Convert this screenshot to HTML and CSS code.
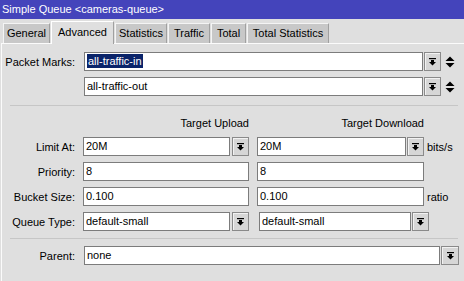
FILE: index.html
```html
<!DOCTYPE html>
<html>
<head>
<meta charset="utf-8">
<link rel="stylesheet" href="styles.css">
</head>
<body>
<div class="window">
  <div class="titlebar">Simple Queue &lt;cameras-queue&gt;</div>
  <div class="tabs">
    <div class="tab t-general">General</div>
    <div class="tab active t-advanced">Advanced</div>
    <div class="tab t-stats">Statistics</div>
    <div class="tab t-traffic">Traffic</div>
    <div class="tab t-total">Total</div>
    <div class="tab t-totalstats">Total Statistics</div>
  </div>
  <div class="panel">
    <div class="row wide">
      <span class="lbl">Packet Marks:</span>
      <div class="field grow"><span class="sel">all-traffic-in</span></div>
      <div class="dd"><svg width="7" height="8" viewBox="0 0 7 8"><rect x="0" y="0" width="7" height="1.2" fill="#000"/><rect x="2" y="2" width="3" height="2.5" fill="#000"/><polygon points="0,4 7,4 3.5,7.6" fill="#000"/></svg></div>
      <div class="updown"><svg width="10" height="12" viewBox="0 0 10 12"><polygon points="5,0.5 9.5,5 0.5,5" fill="#000"/><polygon points="0.5,7 9.5,7 5,11.5" fill="#000"/></svg></div>
    </div>
    <div class="row wide">
      <span class="lbl"></span>
      <div class="field grow">all-traffic-out</div>
      <div class="dd"><svg width="7" height="8" viewBox="0 0 7 8"><rect x="0" y="0" width="7" height="1.2" fill="#000"/><rect x="2" y="2" width="3" height="2.5" fill="#000"/><polygon points="0,4 7,4 3.5,7.6" fill="#000"/></svg></div>
      <div class="updown"><svg width="10" height="12" viewBox="0 0 10 12"><polygon points="5,0.5 9.5,5 0.5,5" fill="#000"/><polygon points="0.5,7 9.5,7 5,11.5" fill="#000"/></svg></div>
    </div>

    <div class="sep"></div>

    <div class="row head">
      <span class="lbl"></span>
      <div class="c1 hd">Target Upload</div>
      <div class="c2 hd">Target Download</div>
    </div>

    <div class="row">
      <span class="lbl">Limit At:</span>
      <div class="c1 combo">
        <div class="field grow">20M</div>
        <div class="dd"><svg width="7" height="8" viewBox="0 0 7 8"><rect x="0" y="0" width="7" height="1.2" fill="#000"/><rect x="2" y="2" width="3" height="2.5" fill="#000"/><polygon points="0,4 7,4 3.5,7.6" fill="#000"/></svg></div>
      </div>
      <div class="c2 combo tight">
        <div class="field grow">20M</div>
        <div class="dd"><svg width="7" height="8" viewBox="0 0 7 8"><rect x="0" y="0" width="7" height="1.2" fill="#000"/><rect x="2" y="2" width="3" height="2.5" fill="#000"/><polygon points="0,4 7,4 3.5,7.6" fill="#000"/></svg></div>
      </div>
      <span class="unit">bits/s</span>
    </div>

    <div class="row">
      <span class="lbl">Priority:</span>
      <div class="c1 field">8</div>
      <div class="c2 field">8</div>
    </div>

    <div class="row">
      <span class="lbl">Bucket Size:</span>
      <div class="c1 field">0.100</div>
      <div class="c2 field">0.100</div>
      <span class="unit">ratio</span>
    </div>

    <div class="row">
      <span class="lbl">Queue Type:</span>
      <div class="c1 combo">
        <div class="field grow">default-small</div>
        <div class="dd"><svg width="7" height="8" viewBox="0 0 7 8"><rect x="0" y="0" width="7" height="1.2" fill="#000"/><rect x="2" y="2" width="3" height="2.5" fill="#000"/><polygon points="0,4 7,4 3.5,7.6" fill="#000"/></svg></div>
      </div>
      <div class="c2 c2-qt combo tight">
        <div class="field grow">default-small</div>
        <div class="dd"><svg width="7" height="8" viewBox="0 0 7 8"><rect x="0" y="0" width="7" height="1.2" fill="#000"/><rect x="2" y="2" width="3" height="2.5" fill="#000"/><polygon points="0,4 7,4 3.5,7.6" fill="#000"/></svg></div>
      </div>
    </div>

    <div class="sep sep2"></div>

    <div class="row full">
      <span class="lbl">Parent:</span>
      <div class="field grow">none</div>
      <div class="dd dd-wide"><svg width="7" height="8" viewBox="0 0 7 8"><rect x="0" y="0" width="7" height="1.2" fill="#000"/><rect x="2" y="2" width="3" height="2.5" fill="#000"/><polygon points="0,4 7,4 3.5,7.6" fill="#000"/></svg></div>
    </div>
  </div>
</div>
</body>
</html>
```

FILE: styles.css
```css
html, body {
  margin: 0;
  padding: 0;
}
body {
  width: 464px;
  height: 281px;
  overflow: hidden;
  background: #dfdfdf;
  font-family: "Liberation Sans", Arial, sans-serif;
  font-size: 11px;
  color: #000;
}
.window {
  width: 464px;
  height: 281px;
  display: flex;
  flex-direction: column;
}
.titlebar {
  height: 19px;
  line-height: 18px;
  background: #4444bb;
  color: #fff;
  padding-left: 2px;
  white-space: nowrap;
}
.tabs {
  height: 24px;
  display: flex;
  align-items: flex-end;
  padding-left: 3px;
  gap: 1px;
}
.tab {
  box-sizing: border-box;
  height: 20px;
  line-height: 18px;
  text-align: center;
  background: #c8c8c8;
  border-top: 1px solid #f4f4f4;
  border-left: 1px solid #f4f4f4;
  border-right: 1px solid #a0a0a0;
  white-space: nowrap;
}
.tab.active {
  height: 23px;
  line-height: 20px;
  background: #dfdfdf;
  border-top-color: #fff;
  border-left-color: #fff;
  margin-bottom: -1px;
  position: relative;
  z-index: 1;
}
.t-general { width: 47px; }
.t-advanced { width: 63px; }
.t-stats { width: 52px; }
.t-traffic { width: 42px; }
.t-total { width: 35px; }
.t-totalstats { width: 82px; }

.panel {
  flex: 1;
  margin-left: 1px;
  border-top: 1px solid #fbfbfb;
  border-left: 1px solid #fbfbfb;
  padding: 8px 5px 0 0;
  display: flex;
  flex-direction: column;
}
.row {
  display: flex;
  align-items: center;
  height: 19px;
  margin-bottom: 6px;
}
.lbl {
  width: 73px;
  flex: none;
  text-align: right;
  margin-right: 8px;
  white-space: nowrap;
}
.field {
  box-sizing: border-box;
  height: 19px;
  line-height: 17px;
  background: #fff;
  border: 1px solid #7c7c7c;
  padding-left: 2px;
  white-space: nowrap;
  overflow: hidden;
}
.grow {
  flex: 1;
  min-width: 0;
}
.sel {
  background: #0a246a;
  color: #fff;
  padding: 0 1px;
  display: inline-block;
  line-height: 14px;
}
.dd {
  box-sizing: border-box;
  width: 17px;
  height: 19px;
  flex: none;
  background: #d6d6d6;
  border: 1px solid #8a8a8a;
  box-shadow: inset 1px 1px 0 #f2f2f2;
  display: flex;
  align-items: center;
  justify-content: center;
}
.dd svg { display: block; }
.dd-wide { width: 18px; }
.wide { gap: 1px; }
.wide .updown {
  margin-left: 3px;
  margin-right: 4px;
}
.updown {
  width: 10px;
  height: 12px;
  flex: none;
}
.updown svg { display: block; }
.full { gap: 1px; }

.sep {
  height: 1px;
  background: #c6c6c6;
  margin: 3px 1px 10px 8px;
  flex: none;
}
.sep2 {
  margin-top: 1px;
  margin-bottom: 7px;
}

.head {
  height: 14px;
  margin-bottom: 7px;
}
.c1 {
  width: 166px;
  flex: none;
}
.c2 {
  width: 167px;
  flex: none;
  margin-left: 8px;
}
.c2-qt {
  width: 170px;
  margin-left: 10px;
}
.hd {
  text-align: right;
  line-height: 14px;
}
.combo {
  display: flex;
  gap: 2px;
}
.combo.tight {
  gap: 1px;
}
.unit {
  margin-left: 3px;
  white-space: nowrap;
}
```
